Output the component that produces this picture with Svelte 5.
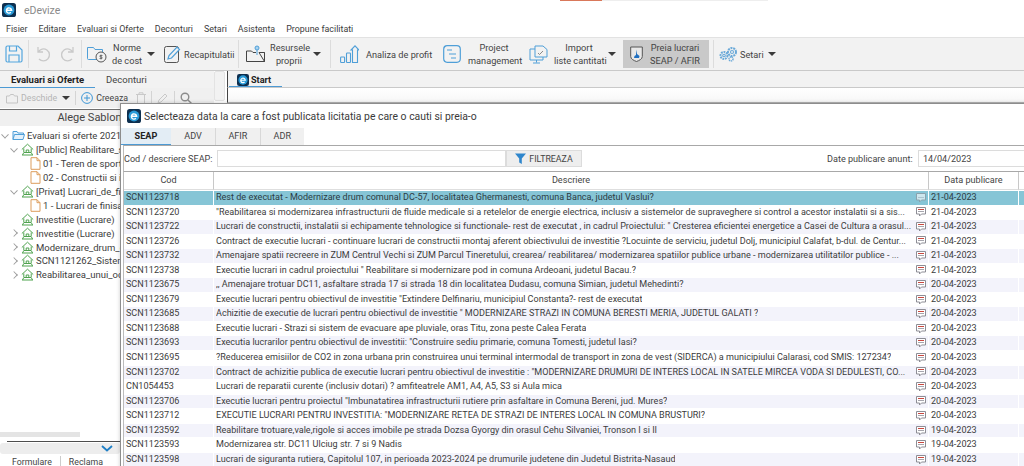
<script>
  const menu = ['Fisier', 'Editare', 'Evaluari si Oferte', 'Deconturi', 'Setari', 'Asistenta', 'Propune facilitati']

  const tree = [
    { label: 'Evaluari si oferte 2021', icon: 'folder', level: 0, arrow: 'open' },
    { label: '[Public] Reabilitare_si_modernizare', icon: 'house', level: 1, arrow: 'open' },
    { label: '01 - Teren de sport', icon: 'doc', level: 2 },
    { label: '02 - Constructii si instalatii', icon: 'doc', level: 2 },
    { label: '[Privat] Lucrari_de_finisaje', icon: 'house', level: 1, arrow: 'open' },
    { label: '1 - Lucrari de finisaje', icon: 'doc', level: 2 },
    { label: 'Investitie (Lucrare)', icon: 'house', level: 1 },
    { label: 'Investitie (Lucrare)', icon: 'house', level: 1, arrow: 'closed' },
    { label: 'Modernizare_drum_comunal', icon: 'house', level: 1, arrow: 'closed' },
    { label: 'SCN1121262_Sistematizare', icon: 'house', level: 1, arrow: 'closed' },
    { label: 'Reabilitarea_unui_occol_silvic', icon: 'house', level: 1, arrow: 'closed' }
  ]

  const rows = [
    ['SCN1123718', 'Rest de executat - Modernizare drum comunal DC-57, localitatea Ghermanesti, comuna Banca, judetul Vaslui?', '21-04-2023'],
    ['SCN1123720', '"Reabilitarea si modernizarea infrastructurii de fluide medicale si a retelelor de energie electrica, inclusiv a sistemelor de supraveghere si control a acestor instalatii si a sis...', '21-04-2023'],
    ['SCN1123722', 'Lucrari de constructii, instalatii si echipamente tehnologice si functionale- rest de executat , in cadrul Proiectului: " Cresterea eficientei energetice a Casei de Cultura a orasul...', '21-04-2023'],
    ['SCN1123726', 'Contract de executie lucrari - continuare lucrari de constructii montaj aferent obiectivului de investitie ?Locuinte de serviciu, judetul Dolj, municipiul Calafat, b-dul. de Centur...', '21-04-2023'],
    ['SCN1123732', 'Amenajare spatii recreere in ZUM Centrul Vechi si ZUM Parcul Tineretului, crearea/ reabilitarea/ modernizarea spatiilor publice urbane - modernizarea utilitatilor publice - ...', '21-04-2023'],
    ['SCN1123738', 'Executie lucrari in cadrul proiectului " Reabilitare si modernizare pod in comuna Ardeoani, judetul Bacau.?', '21-04-2023'],
    ['SCN1123675', ',, Amenajare trotuar DC11, asfaltare strada 17 si strada 18 din localitatea Dudasu, comuna Simian, judetul Mehedinti?', '20-04-2023'],
    ['SCN1123679', 'Executie lucrari pentru obiectivul de investitie "Extindere Delfinariu, municipiul Constanta?- rest de executat', '20-04-2023'],
    ['SCN1123685', 'Achizitie de executie de lucrari pentru obiectivul de investitie " MODERNIZARE STRAZI IN COMUNA BERESTI MERIA, JUDETUL GALATI ?', '20-04-2023'],
    ['SCN1123688', 'Executie lucrari - Strazi si sistem de evacuare ape pluviale, oras Titu, zona peste Calea Ferata', '20-04-2023'],
    ['SCN1123693', 'Executia lucrarilor pentru obiectivul de investitii: "Construire sediu primarie, comuna Tomesti, judetul Iasi?', '20-04-2023'],
    ['SCN1123695', '?Reducerea emisiilor de CO2 in zona urbana prin construirea unui terminal intermodal de transport in zona de vest (SIDERCA) a municipiului Calarasi, cod SMIS: 127234?', '20-04-2023'],
    ['SCN1123702', 'Contract de achizitie publica de executie lucrari pentru obiectivul de investitie : "MODERNIZARE DRUMURI DE INTERES LOCAL IN SATELE MIRCEA VODA SI DEDULESTI, CO...', '20-04-2023'],
    ['CN1054453', 'Lucrari de reparatii curente (inclusiv dotari) ? amfiteatrele AM1, A4, A5, S3 si Aula mica', '20-04-2023'],
    ['SCN1123706', 'Executie lucrari pentru proiectul "Imbunatatirea infrastructurii rutiere prin asfaltare in Comuna Bereni, jud. Mures?', '20-04-2023'],
    ['SCN1123712', 'EXECUTIE LUCRARI PENTRU INVESTITIA: "MODERNIZARE RETEA DE STRAZI DE INTERES LOCAL IN COMUNA BRUSTURI?', '20-04-2023'],
    ['SCN1123592', 'Reabilitare trotuare,vale,rigole si acces imobile pe strada Dozsa Gyorgy din orasul Cehu Silvaniei, Tronson I si II', '19-04-2023'],
    ['SCN1123593', 'Modernizarea str. DC11 Ulciug str. 7 si 9 Nadis', '19-04-2023'],
    ['SCN1123598', 'Lucrari de siguranta rutiera, Capitolul 107, in perioada 2023-2024 pe drumurile judetene din Judetul Bistrita-Nasaud', '19-04-2023']
  ]
</script>

{#snippet logo(size)}
  <svg width={size} height={size} viewBox="0 0 16 16">
    <rect width="16" height="16" rx="3" fill="#0d2f4f" />
    <circle cx="8" cy="8" r="6.2" fill="#2a9bd8" />
    <path d="M5 8.3h6a3 3 0 1 0-.9 2.4" fill="none" stroke="#fff" stroke-width="1.6" />
  </svg>
{/snippet}

{#snippet caret()}
  <span class="caret"></span>
{/snippet}

{#snippet treeIcon(kind)}
  {#if kind === 'folder'}
    <svg width="13" height="11" viewBox="0 0 13 11" fill="#e4f1fb" stroke="#4f9fd8" stroke-width="1">
      <path d="M1 9.5V1.5h4l1 1.5h5.500v1.500" />
      <path d="M1 9.500 2.500 4.500H12.500L11 9.500Z" />
    </svg>
  {:else if kind === 'house'}
    <svg width="13" height="13" viewBox="0 0 13 13" fill="none" stroke="#4fa34f" stroke-width="1">
      <path d="M.8 6.500 6.500 1.200l5.700 5.300M2.800 5.500V9.500h7.400V5.500" />
      <path d="M5.200 9.500V7h2.600v2.500M1 12h11M2.500 10l-1 2M10.500 10l1 2" />
    </svg>
  {:else}
    <svg width="11" height="13" viewBox="0 0 11 13" fill="#fff" stroke="#dd9d5c" stroke-width="1">
      <path d="M1 .7H7L10 3.700V12.300H1Z" />
      <path d="M7 .7V3.700H10" fill="none" />
    </svg>
  {/if}
{/snippet}

{#snippet note(flag)}
  <svg class="note" width="10" height="10" viewBox="0 0 10 10" fill="#fff" stroke="#8d8d95" stroke-width="1">
    <path d="M.5.500h9v6.500H5.500L3.500 9V7H.5Z" />
    {#if flag}<path d="M2 2.500h6" stroke="#c9483f" />{/if}
    <path d="M2 4.500h6" stroke={flag ? '#a5a5ad' : '#c4c4cc'} />
  </svg>
{/snippet}

<div class="app">
  <header class="titlebar">
    <span class="applogo">{@render logo(14)}</span>
    <span class="apptitle">eDevize</span>
    <span class="progress"><i></i></span>
  </header>

  <nav class="menubar">
    {#each menu as item}<span>{item}</span>{/each}
  </nav>

  <div class="toolbar">
    <button class="tool save" aria-label="Salveaza">
      <svg width="18" height="18" viewBox="0 0 18 18" fill="none" stroke="#53a6de" stroke-width="1.200">
        <path d="M1 2.500A1.500 1.500 0 0 1 2.500 1H13l4 4v10.500a1.500 1.500 0 0 1-1.500 1.500h-13A1.500 1.500 0 0 1 1 15.500Z" />
        <path d="M4.500 1v5h7V1M4 17v-7h10v7" />
      </svg>
    </button>
    <i class="sep s1"></i>
    <button class="tool undo" aria-label="Anuleaza">
      <svg width="16" height="16" viewBox="0 0 16 16" fill="none" stroke="#c9c9c9" stroke-width="1.300">
        <path d="M3 1v5h5M3.200 6A6 6 0 1 1 4 13" />
      </svg>
    </button>
    <button class="tool redo" aria-label="Reface">
      <svg width="16" height="16" viewBox="0 0 16 16" fill="none" stroke="#c9c9c9" stroke-width="1.300">
        <path d="M13 1v5H8M12.800 6A6 6 0 1 0 12 13" />
      </svg>
    </button>
    <i class="sep s2"></i>
    <button class="tool norme">
      <svg width="20" height="17" viewBox="0 0 20 17" fill="none" stroke="#4f9fd8" stroke-width="1">
        <path d="M10 13.500H1.500A1 1 0 0 1 .5 12.500V1.500h6l1.500 2h7.500v3" />
        <circle cx="14" cy="11" r="5" fill="#f2f2f2" stroke="#555" />
        <path d="M15.500 9.500h-2.500v1.500h2v1.500h-2.500M14 8.500v5" stroke="#555" stroke-width=".7" />
      </svg>
      <span class="label two">Norme<br />de cost</span>
      {@render caret()}
    </button>
    <button class="tool recap">
      <svg width="17" height="18" viewBox="0 0 17 18" fill="none">
        <rect x=".5" y="1.500" width="14" height="16" rx="2" stroke="#555" />
        <path d="M4 14l1-3.500L13 2l2.500 2.500L7.500 13Z" fill="#f2f2f2" stroke="#4f9fd8" stroke-width="1.200" />
      </svg>
      <span class="label">Recapitulatii</span>
    </button>
    <i class="sep s3"></i>
    <button class="tool resurse">
      <svg width="19" height="18" viewBox="0 0 19 18" fill="none" stroke="#444" stroke-width="1">
        <path d="M.5 16.500V6h5l1.500 1.500h3M13 7.500h5.500v9Z" />
        <path d="M.5 16.500h18V7.500" />
        <circle cx="11" cy="3" r="2" fill="#a9d3f0" stroke="#4f9fd8" />
        <path d="M11 5v5" stroke="#4f9fd8" />
      </svg>
      <span class="label two">Resursele<br />proprii</span>
      {@render caret()}
    </button>
    <i class="sep s4"></i>
    <button class="tool analiza">
      <svg width="19" height="18" viewBox="0 0 19 18" fill="none" stroke="#4f9fd8" stroke-width="1.100">
        <rect x=".6" y="12" width="4" height="5.500" rx=".8" />
        <rect x="6.500" y="8" width="4" height="9.500" rx=".8" />
        <path d="M12.500 17.500V5H11L15 .8 19 5h-1.500v12.500Z" />
      </svg>
      <span class="label">Analiza de profit</span>
    </button>
    <button class="tool project">
      <svg width="18" height="18" viewBox="0 0 18 18" fill="none" stroke="#4f9fd8" stroke-width="1.200">
        <rect x=".7" y=".7" width="16.600" height="16.600" rx="3.500" />
        <path d="M4 5h5M6 9h7M8 13h5" />
      </svg>
      <span class="label two">Project<br />management</span>
    </button>
    <button class="tool importt">
      <svg width="19" height="19" viewBox="0 0 19 19" fill="none" stroke="#4f9fd8" stroke-width="1">
        <path d="M6 4H1v11h13v-3" />
        <path d="M6 1h8l4 3.500V12H6Z" fill="#f2f2f2" />
        <path d="M9 8l1.500 1.500L14 6" stroke="#888" />
        <path d="M7.500 15v2.500M4 18h7" />
      </svg>
      <span class="label two">Import<br />liste cantitati</span>
      {@render caret()}
    </button>
    <button class="tool preia">
      <svg width="13" height="16" viewBox="0 0 13 16" fill="#e8e8e8" stroke="#555" stroke-width="1">
        <path d="M.7 1h11.600v9.500c0 2.500-3 4-5.800 5-2.800-1-5.800-2.500-5.800-5Z" />
        <path d="M6 3.500 7 8 9.500 10 9 12H4l.5-2L6 9Z" fill="#1f6fc0" stroke="none" />
      </svg>
      <span class="label two">Preia lucrari<br />SEAP / AFIR</span>
    </button>
    <i class="sep s5"></i>
    <button class="tool setari">
      <svg width="19" height="15" viewBox="0 0 19 15" fill="none" stroke="#6aa9d8" stroke-width="1.100">
        <circle cx="5" cy="8.500" r="3.500" stroke-dasharray="1.800 .8" stroke-width="2" />
        <circle cx="5" cy="8.500" r="1.300" />
        <circle cx="13" cy="5" r="4" stroke-dasharray="2 .8" stroke-width="2" />
        <circle cx="13" cy="5" r="1.500" />
        <circle cx="12" cy="12" r="2" stroke-dasharray="1.200 .6" stroke-width="1.500" />
      </svg>
      <span class="label">Setari</span>
      {@render caret()}
    </button>
  </div>

  <div class="workspace">
    <aside class="left">
      <div class="lefttabs">
        <span class="ltab active">Evaluari si Oferte</span>
        <span class="ltab">Deconturi</span>
      </div>
      <div class="lefttools">
        <span class="ltool muted">
          <svg width="12" height="11" viewBox="0 0 12 11" fill="none" stroke="#c4c4c4"><path d="M.5 10V3h3l1-1.500h3L8.500 3h3v7Z" /></svg>
          Deschide
          {@render caret()}
        </span>
        <i class="lsep"></i>
        <span class="ltool">
          <svg width="12" height="12" viewBox="0 0 12 12" fill="none" stroke="#3f97d6"><circle cx="6" cy="6" r="5.400" /><path d="M6 3v6M3 6h6" /></svg>
          Creeaza
        </span>
        <svg class="ltrash" width="10" height="12" viewBox="0 0 10 12" fill="none" stroke="#c9c9c9"><path d="M0 2.500h10M3 2.500V.8h4v1.700M1.500 2.500v9h7v-9" /></svg>
        <i class="lsep"></i>
        <svg class="lpen" width="12" height="12" viewBox="0 0 12 12" fill="none" stroke="#c9c9c9"><path d="M1 11l1-3 6-6 2 2-6 6Z" /></svg>
        <i class="lsep"></i>
        <svg class="lzoom" width="12" height="12" viewBox="0 0 12 12" fill="none" stroke="#8c8c8c" stroke-width="1.400"><circle cx="5" cy="5" r="3.800" /><path d="M8 8l3.500 3.500" /></svg>
      </div>
      <div class="sablon">Alege Sablon</div>
      <ul class="tree">
        {#each tree as node}
          <li class="lvl{node.level}">
            <span class="arrow {node.arrow ?? ''}"></span>
            {@render treeIcon(node.icon)}
            <span class="nodetext">{node.label}</span>
          </li>
        {/each}
      </ul>
      <div class="leftbottom">
        <div class="hscroll"></div>
        <div class="rule"></div>
        <div class="collapse">
          <svg width="12" height="7" viewBox="0 0 12 7" fill="none" stroke="#1f7fc6" stroke-width="1.800"><path d="M1 1l5 4.500L11 1" /></svg>
        </div>
        <div class="bottomtabs"><span>Formulare</span><span>Reclama</span></div>
      </div>
    </aside>

    <section class="main">
      <div class="grip"></div>
      <div class="mainbody">
        <div class="doctabs">
          <span class="doctab">{@render logo(12)} Start</span>
        </div>
        <div class="docstrip"></div>
      </div>
    </section>
  </div>

  <div class="dialog">
    <div class="dlgtitle">
      {@render logo(14)}
      <span>Selecteaza data la care a fost publicata licitatia pe care o cauti si preia-o</span>
    </div>
    <div class="dlgtabs">
      <span class="dtab active">SEAP</span>
      <span class="dtab">ADV</span>
      <span class="dtab">AFIR</span>
      <span class="dtab">ADR</span>
    </div>
    <div class="filter">
      <label class="codlabel" for="cod">Cod / descriere SEAP:</label>
      <input id="cod" type="text" />
      <button class="filterbtn">
        <svg width="11" height="11" viewBox="0 0 11 11"><path d="M0 .5h11L6.800 5.500V11L4.200 9.500v-4Z" fill="#2f86cc" /></svg>
        FILTREAZA
      </button>
      <label class="datelabel" for="data">Date publicare anunt:</label>
      <input id="data" class="dateinput" type="text" value="14/04/2023" />
    </div>
    <div class="grid">
      <div class="gridhead">
        <span>Cod</span>
        <span>Descriere</span>
        <span>Data publicare</span>
        <span></span>
      </div>
      {#each rows as row, i}
        <div class="gridrow" class:selected={i === 0} class:alt={i % 2 === 0}>
          <span class="c">{row[0]}</span>
          <span class="c desc"><em>{row[1]}</em>{@render note(i > 0)}</span>
          <span class="c">{row[2]}</span>
          <span class="c"></span>
        </div>
      {/each}
    </div>
  </div>
</div>

<style>
  :global(body) {
    margin: 0;
    background: #fff;
  }
  .app {
    position: relative;
    width: 1024px;
    height: 466px;
    overflow: hidden;
    display: flex;
    flex-direction: column;
    font-family: Roboto, "Noto Sans", sans-serif;
    font-size: 9.100px;
    color: #444;
    background: #fff;
  }
  button {
    font: inherit;
    color: inherit;
    background: none;
    border: 0;
    padding: 0;
  }

  .titlebar {
    height: 20px;
    display: flex;
    align-items: center;
    padding-left: 2px;
    position: relative;
  }
  .applogo {
    display: flex;
  }
  .apptitle {
    margin-left: 8px;
    font-size: 10.500px;
    color: #8a8a8a;
  }
  .progress {
    position: absolute;
    left: 560px;
    top: 0;
    width: 208px;
    height: 1px;
    background: #eee;
  }
  .progress i {
    display: block;
    width: 42px;
    height: 1px;
    background: #d9785a;
  }

  .menubar {
    height: 17px;
    display: flex;
    align-items: center;
    gap: 11px;
    padding-left: 6px;
    font-size: 8.900px;
    color: #3d3d3d;
  }

  .toolbar {
    height: 34px;
    box-sizing: border-box;
    display: flex;
    align-items: center;
    background: #f2f2f2;
    border-top: 1px solid #e2e2e2;
    border-bottom: 1px solid #c9c9c9;
  }
  .tool {
    display: flex;
    align-items: center;
    flex: none;
    height: 28px;
  }
  .label {
    font-size: 9.200px;
    line-height: 13px;
    text-align: center;
    white-space: nowrap;
  }
  .caret {
    display: inline-block;
    width: 0;
    height: 0;
    border-left: 4px solid transparent;
    border-right: 4px solid transparent;
    border-top: 4px solid #3b3b3b;
  }
  .sep {
    flex: none;
    width: 1px;
    height: 28px;
    background: #dcdcdc;
  }
  .save { margin-left: 5px; }
  .s1 { margin-left: 5px; }
  .undo { margin-left: 6px; }
  .redo { margin-left: 9px; }
  .s2 { margin-left: 5px; }
  .norme { margin-left: 5px; }
  .norme .label { width: 30px; margin: 0 5px 0 5px; }
  .recap { margin-left: 9px; }
  .recap .label { width: 48px; margin-left: 3px; }
  .s3 { margin-left: 6px; }
  .resurse { margin-left: 7px; }
  .resurse .label { width: 38px; margin: 0 5px 0 5px; }
  .s4 { margin-left: 9px; }
  .analiza { margin-left: 9px; }
  .analiza .label { width: 66px; margin-left: 7px; }
  .project { margin-left: 11px; }
  .project .label { width: 52px; margin-left: 7px; }
  .importt { margin-left: 9px; }
  .importt .label { width: 50px; margin: 0 4px 0 6px; }
  .preia {
    margin-left: 7px;
    width: 86px;
    box-sizing: border-box;
    padding-left: 7px;
    background: #c9c9c9;
  }
  .preia .label { width: 58px; margin-left: 3px; }
  .s5 { margin-left: 4px; }
  .setari { margin-left: 5px; }
  .setari .label { margin: 0 4px 0 2px; }

  .workspace {
    flex: 1;
    min-height: 0;
    display: flex;
  }
  .left {
    width: 227px;
    flex: none;
    display: flex;
    flex-direction: column;
    overflow: hidden;
    white-space: nowrap;
  }
  .lefttabs {
    height: 17px;
    flex: none;
    display: flex;
    align-items: center;
    background: #f2f2f2;
    width: 214px;
    box-sizing: border-box;
    font-size: 9.500px;
  }
  .ltab {
    height: 17px;
    line-height: 17px;
    box-sizing: border-box;
    padding: 0 0 0 11px;
  }
  .ltab.active {
    width: 95px;
    font-weight: 700;
    color: #222;
    border-bottom: 1.500px solid #4c9ad4;
  }
  .ltab + .ltab {
    padding-left: 11px;
    color: #444;
  }
  .lefttools {
    height: 20px;
    flex: none;
    width: 214px;
    display: flex;
    align-items: center;
    background: #f0f0f0;
    padding-left: 6px;
    box-sizing: border-box;
    font-size: 8.800px;
  }
  .ltool {
    display: flex;
    align-items: center;
    gap: 3px;
  }
  .ltool.muted {
    color: #b5b5b5;
  }
  .ltool.muted .caret {
    margin-left: 2px;
  }
  .lsep {
    width: 1px;
    height: 14px;
    background: #d4d4d4;
    margin: 0 5px;
  }
  .ltrash {
    margin-left: 8px;
  }
  .sablon {
    height: 16px;
    flex: none;
    line-height: 16px;
    border-top: 1px solid #6f6f6f;
    text-align: center;
    font-size: 11px;
    background: #f0f0f0;
    padding-right: 48px;
    margin-top: 1px;
  }
  .tree {
    list-style: none;
    margin: 3px 0 0;
    padding: 0;
  }
  .tree li {
    height: 13.900px;
    display: flex;
    align-items: center;
    gap: 2px;
    font-size: 9.500px;
    color: #3d3d3d;
  }
  .lvl0 { padding-left: 2px; }
  .lvl1 { padding-left: 11px; }
  .lvl2 { padding-left: 20px; }
  .arrow {
    width: 6px;
    height: 6px;
    flex: none;
    margin-right: 2px;
    box-sizing: border-box;
  }
  .arrow.open {
    border-right: 1.200px solid #9a9a9a;
    border-bottom: 1.200px solid #9a9a9a;
    transform: scale(.9) rotate(45deg) translate(-1px, -1px);
  }
  .arrow.closed {
    border-right: 1.200px solid #9a9a9a;
    border-top: 1.200px solid #9a9a9a;
    transform: scale(.9) rotate(45deg);
  }
  .leftbottom {
    margin-top: auto;
    height: 34px;
    flex: none;
  }
  .hscroll {
    width: 80px;
    height: 5px;
    background: #e4e4e4;
  }
  .rule {
    height: 1px;
    margin: 4px 0 0 7px;
    background: #4d4d4d;
  }
  .collapse {
    height: 11px;
    width: 120px;
    box-sizing: border-box;
    margin-top: 1px;
    background: #ededed;
    border-radius: 3px;
    display: flex;
    align-items: center;
    justify-content: flex-end;
    padding-right: 7px;
  }
  .bottomtabs {
    display: flex;
    align-items: center;
    gap: 8px;
    padding: 2px 0 0 12px;
    line-height: 12px;
    font-size: 8.800px;
  }
  .bottomtabs span + span {
    border-left: 1px solid #ccc;
    padding-left: 8px;
  }

  .main {
    flex: 1;
    min-width: 0;
    position: relative;
  }
  .grip {
    position: absolute;
    left: -13px;
    top: 0;
    width: 11px;
    height: 30px;
    background: #f2f2f2;
    border: 1px solid #e3e3e3;
    border-radius: 2px;
    box-sizing: border-box;
  }
  .mainbody {
    height: 100%;
    background: #f2f2f2;
  }
  .doctabs {
    height: 17px;
    box-sizing: border-box;
    border-bottom: 1px solid #c9c9c9;
    display: flex;
    align-items: flex-end;
    padding-left: 1px;
    border-left: 1px solid #444;
  }
  .doctab {
    height: 13px;
    width: 53px;
    padding-left: 8px;
    box-sizing: border-box;
    display: flex;
    align-items: center;
    gap: 2px;
    font-weight: 700;
    color: #222;
    border-bottom: 1.500px solid #4c9ad4;
  }
  .docstrip {
    height: 14px;
    background: linear-gradient(#fff, #f7f7f7);
    border-bottom: 1px solid #b5b5b5;
    border-left: 1px solid #444;
  }

  .dialog {
    position: absolute;
    left: 120px;
    top: 103px;
    width: 960px;
    height: 420px;
    box-sizing: border-box;
    background: #fff;
    border: 1px solid #8d8d8d;
    border-right: 0;
    display: flex;
    flex-direction: column;
    box-shadow: 0 0 4px rgba(0, 0, 0, .2);
  }
  .dlgtitle {
    height: 24px;
    flex: none;
    display: flex;
    align-items: center;
    gap: 3px;
    padding: 0 0 0 6px;
    font-size: 10.400px;
    color: #3a3a3a;
  }
  .dlgtabs {
    height: 17px;
    flex: none;
    width: 183px;
    display: flex;
    background: #f0f0f0;
    align-items: center;
  }
  .dtab {
    width: 44.500px;
    height: 100%;
    line-height: 17px;
    text-align: center;
    box-sizing: border-box;
    color: #444;
  }
  .dtab + .dtab + .dtab,
  .dtab + .dtab + .dtab + .dtab {
    border-left: 1px solid #d8d8d8;
    background-clip: padding-box;
  }
  .dtab.active {
    width: 50px;
    font-weight: 700;
    color: #222;
    background: #e3edf5;
    border-bottom: 1.500px solid #4c9ad4;
  }
  .filter {
    height: 27px;
    flex: none;
    box-sizing: border-box;
    display: flex;
    align-items: center;
    border-top: 1px solid #a8a8a8;
    border-bottom: 1px solid #a8a8a8;
    border-left: 1px solid #bbb;
    margin-left: 2px;
    color: #444;
  }
  .filter label {
    flex: none;
    white-space: nowrap;
  }
  .codlabel {
    width: 87px;
  }
  .filter input {
    box-sizing: border-box;
    height: 17px;
    border: 1px solid #dcdcdc;
    background: #fff;
    padding: 0 4px;
    font: inherit;
    color: #444;
    outline: 0;
  }
  #cod {
    width: 289px;
    flex: none;
    margin-left: 6px;
  }
  .filterbtn {
    flex: none;
    width: 76px;
    height: 17px;
    display: flex;
    align-items: center;
    justify-content: center;
    gap: 3px;
    background: #eee;
    border: 1px solid #dcdcdc;
    box-sizing: border-box;
    color: #444;
    font-size: 8.800px;
  }
  .filter .datelabel {
    margin-left: 245px;
    width: 86px;
  }
  .dateinput {
    width: 200px;
    margin-left: 5px;
    flex: none;
  }
  .grid {
    flex: 1;
    margin-left: 2px;
    border-left: 1px solid #bbb;
    min-height: 0;
  }
  .gridhead,
  .gridrow {
    display: grid;
    grid-template-columns: 89px 714px 89px 1fr;
    column-gap: 1px;
  }
  .gridhead {
    height: 18px;
    line-height: 17px;
    text-align: center;
    color: #444;
    border-bottom: 1px solid #fff;
  }
  .gridhead span {
    border-right: 1px solid #c8c8c8;
    border-bottom: 1px solid #dedede;
    margin-right: -1px;
  }
  .gridrow {
    height: 14.550px;
    line-height: 13.500px;
    color: #3c3c3c;
    font-size: 9.050px;
  }
  .c {
    padding-left: 2px;
    white-space: nowrap;
    overflow: hidden;
    height: 13.500px;
  }
  .desc {
    display: flex;
    align-items: center;
    justify-content: space-between;
    padding-right: 2px;
  }
  .desc em {
    font-style: normal;
    min-width: 0;
    overflow: hidden;
  }
  .note {
    flex: none;
  }
  .alt .c {
    background: #f3f3fb;
  }
  .selected .c {
    background: #86c5d6;
    color: #2c3c44;
  }
  .selected .note {
    opacity: .6;
  }
</style>
